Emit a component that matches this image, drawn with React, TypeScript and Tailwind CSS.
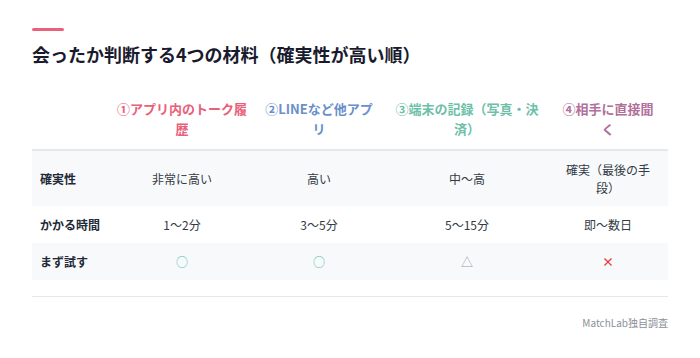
import React from "react";

const headers = [
  { text: "①アプリ内のトーク履歴", color: "text-[#e8607a]", max: "max-w-[136px]" },
  { text: "②LINEなど他アプリ", color: "text-[#6b8fc9]", max: "max-w-[118px]" },
  { text: "③端末の記録（写真・決済）", color: "text-[#6dbfa8]", max: "max-w-[150px]" },
  { text: "④相手に直接聞く", color: "text-[#b0709a]", max: "max-w-[100px]" },
];

type Cell = { v: React.ReactNode; cls?: string };

const rows: { label: string; bg: string; cells: Cell[] }[] = [
  {
    label: "確実性",
    bg: "bg-[#f8f9fb]",
    cells: [
      { v: "非常に高い" },
      { v: "高い" },
      { v: "中〜高" },
      { v: <div className="mx-auto max-w-[90px]">確実（最後の手段）</div> },
    ],
  },
  {
    label: "かかる時間",
    bg: "bg-white",
    cells: [{ v: "1〜2分" }, { v: "3〜5分" }, { v: "5〜15分" }, { v: "即〜数日" }],
  },
  {
    label: "まず試す",
    bg: "bg-[#f8f9fb]",
    cells: [
      { v: "○", cls: "text-[#4fc3a6]" },
      { v: "○", cls: "text-[#4fc3a6]" },
      { v: "△", cls: "text-[#9aa0aa]" },
      { v: "×", cls: "text-[#e53e3e] font-bold" },
    ],
  },
];

const widths = ["w-[80px]", "w-[140px]", "w-[134px]", "w-[162px]", "w-[120px]"];

export default function App() {
  return (
    <div
      className="w-[700px] h-[358px] bg-white px-8 pt-7"
      style={{ fontFamily: '"Noto Sans CJK JP", "Noto Sans", sans-serif' }}
    >
      <div className="h-[3px] w-8 bg-[#e8607a] rounded-full" />
      <h1 className="mt-[10px] text-[18px] leading-[27px] font-bold text-[#1a1a2e]">
        会ったか判断する4つの材料（確実性が高い順）
      </h1>
      <table className="mt-[27px] w-full table-fixed border-collapse">
        <colgroup>
          {widths.map((w, i) => (
            <col key={i} className={w} />
          ))}
        </colgroup>
        <thead>
          <tr className="border-b-2 border-[#e5e7eb]">
            <th className="px-2 pt-1 pb-[10px]" />
            {headers.map((h, i) => (
              <th key={i} className="px-1 pt-1 pb-[10px] align-middle">
                <div className={`mx-auto text-[13px] leading-5 font-bold text-center ${h.color} ${h.max}`}>
                  {h.text}
                </div>
              </th>
            ))}
          </tr>
        </thead>
        <tbody>
          {rows.map((r, i) => (
            <tr key={i} className={r.bg}>
              <td className="px-2 py-[9.5px] text-[12px] leading-[18px] font-bold text-[#1f2937] text-left">
                {r.label}
              </td>
              {r.cells.map((c, j) => (
                <td
                  key={j}
                  className={`px-1 py-[9.5px] text-[12px] leading-[18px] text-center ${c.cls ?? "text-[#333a44]"}`}
                >
                  {c.v}
                </td>
              ))}
            </tr>
          ))}
        </tbody>
      </table>
      <div className="mt-4 border-t border-[#e5e7eb]" />
      <div className="mt-[19px] text-right text-[10px] leading-[14px] text-[#8a8f99]">MatchLab独自調査</div>
    </div>
  );
}
